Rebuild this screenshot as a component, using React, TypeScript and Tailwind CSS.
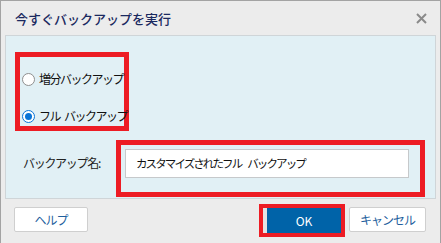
import React from "react";

function Radio({ checked }: { checked?: boolean }) {
  if (checked) {
    return (
      <span className="flex h-[13px] w-[13px] shrink-0 items-center justify-center rounded-full border border-[#0a74d6] bg-white">
        <span className="h-[7px] w-[7px] rounded-full bg-[#0a74d6]" />
      </span>
    );
  }
  return <span className="h-[13px] w-[13px] shrink-0 rounded-full border border-[#8f8f8f] bg-white" />;
}

export default function App() {
  return (
    <div className="flex h-[243px] w-[441px] flex-col border-x border-t border-[#a3a3a3] bg-[#ececec] font-['Noto_Sans_CJK_JP',sans-serif]">
      {/* header */}
      <div className="flex h-[34px] items-center justify-between pl-[14px] pr-[12px]">
        <span className="text-[13px] font-medium leading-none text-[#1a2960]">今すぐバックアップを実行</span>
        <svg width="11" height="11" viewBox="0 0 11 11" className="mr-[1px]">
          <path d="M1 1L10 10M10 1L1 10" stroke="#8a8a8a" strokeWidth="2" />
        </svg>
      </div>

      {/* panel */}
      <div className="mx-[4px] h-[164px] border border-[#cfd5d8] bg-[#e1f0f5] pl-[9px] pt-[16px]">
        <div className="flex h-[79px] w-[114px] flex-col border-[5px] border-[#ed1c24] pl-[2px] pt-[14px]">
          <label className="flex h-[16px] items-center gap-[4px] whitespace-nowrap text-[12px] tracking-[-1.5px] text-[#111]">
            <Radio />
            増分バックアップ
          </label>
          <label className="mt-[21px] flex h-[16px] items-center gap-[4px] whitespace-nowrap text-[12px] tracking-[-1.5px] text-[#111]">
            <Radio checked />
            <span>
              フル<span className="inline-block w-[4px]"> </span>バックアップ
            </span>
          </label>
        </div>

        <div className="mt-[9px] flex items-start">
          <span className="mt-[15px] w-[101px] whitespace-nowrap pl-[8px] text-[12px] leading-[16px] tracking-[-1.3px] text-[#222]">
            バックアップ名:
          </span>
          <div className="h-[57px] w-[309px] border-[5px] border-[#ed1c24] pl-[4px] pt-[4px]">
            <div className="flex h-[29px] w-[284px] items-center whitespace-nowrap border border-[#c6c9cb] bg-white px-[10px] text-[11.5px] tracking-[-1.9px] text-[#111]">
              カスタマイズされたフル<span className="inline-block w-[6px]"> </span>バックアップ
            </div>
          </div>
        </div>
      </div>

      {/* footer */}
      <div className="flex flex-1 items-start">
        <button className="ml-[13px] mt-[8px] flex h-[25px] w-[74px] items-center justify-center rounded-[2px] border border-[#cfcfcf] bg-white text-[12px] tracking-[-1px] text-[#1f5f9e]">
          ヘルプ
        </button>
        <div className="ml-auto mt-[5px] flex h-[33px] w-[86px] border-[4px] border-[#ed1c24]">
          <span className="w-[4px] bg-[#e4e4e4]" />
          <button className="flex flex-1 items-center justify-center bg-[#0063a8] text-[12px] font-normal text-white">OK</button>
        </div>
        <button className="ml-[4px] mr-[14px] mt-[8px] flex h-[25px] w-[77px] items-center justify-center rounded-[2px] border border-[#cfcfcf] bg-white text-[12px] tracking-[-1px] text-[#1f5f9e]">
          キャンセル
        </button>
      </div>
    </div>
  );
}
